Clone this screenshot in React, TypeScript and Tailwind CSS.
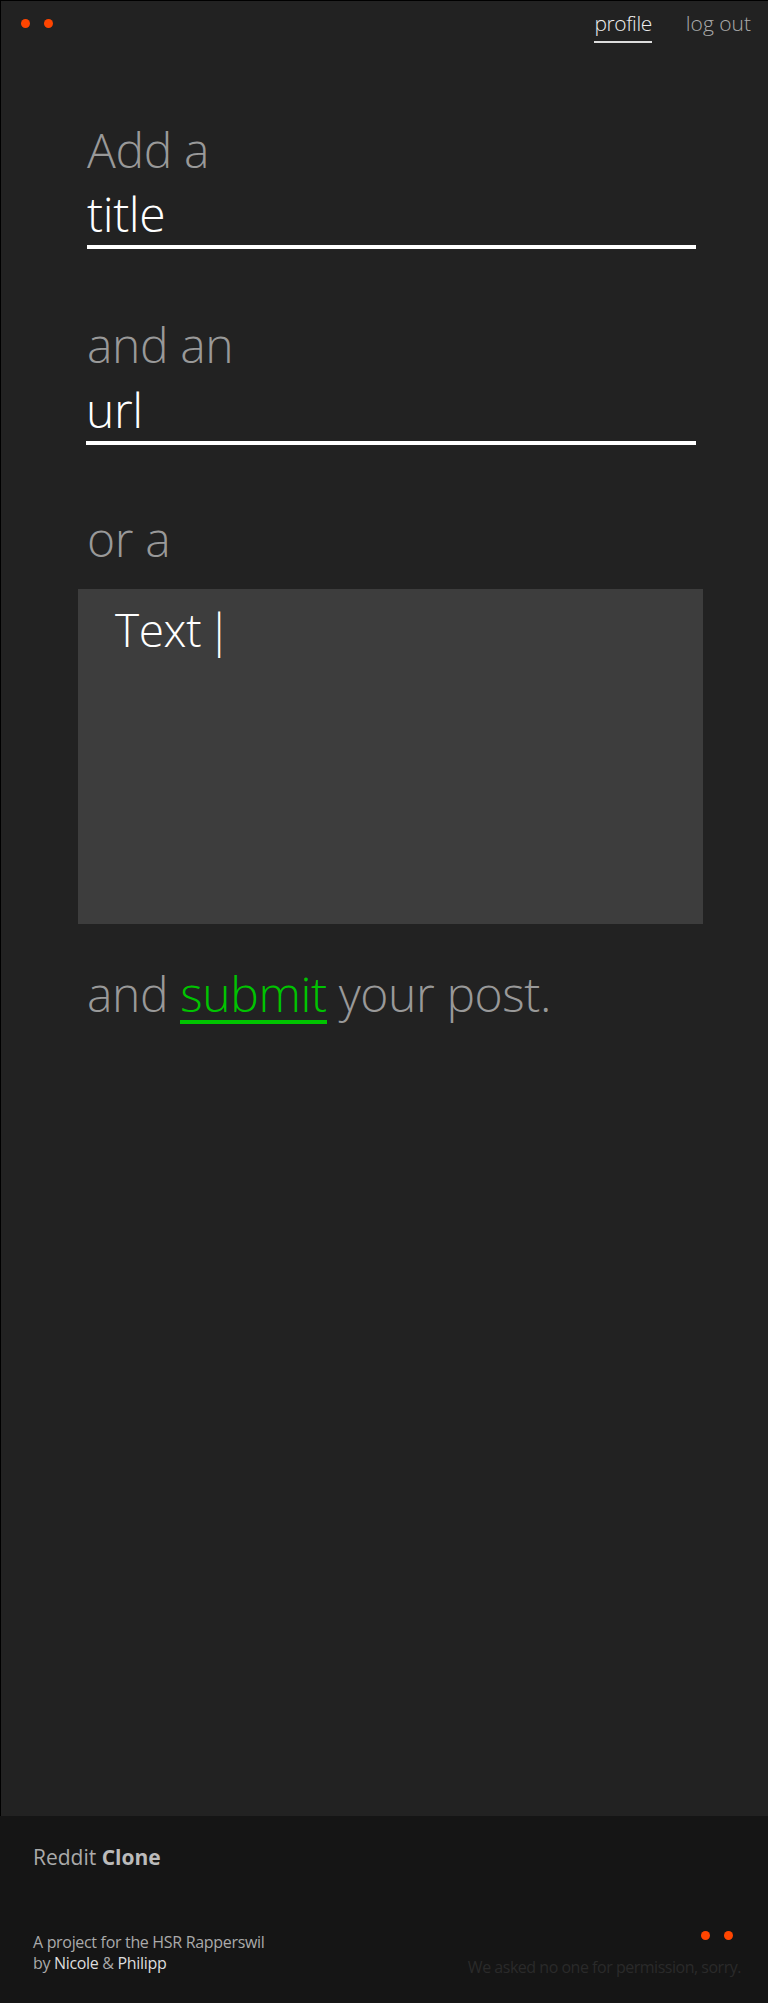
import React from "react";

export default function App() {
  return (
    <div className="font-['Open_Sans',sans-serif] bg-[#222222]">
      <main className="min-h-[1816px] border-l border-t border-black">
        <header className="flex items-start justify-between pl-[20px] pr-[17px]">
          <div className="flex gap-[14px] pt-[18px]">
            <span className="block w-[9px] h-[9px] rounded-full bg-[#ff4500]" />
            <span className="block w-[9px] h-[9px] rounded-full bg-[#ff4500]" />
          </div>
          <nav className="flex gap-[34px] pt-[8px] text-[21px] leading-[29px] font-light">
            <a className="block text-[#eeeeee] border-b-2 border-[#dddddd] pb-[3px] tracking-[-0.02em]">profile</a>
            <a className="block text-[#aaaaaa]">log out</a>
          </nav>
        </header>

        <form className="pl-[86px] pr-[72px] pt-[79px] text-[48px] leading-[56px] font-light tracking-[-0.008em]">
          <label className="block text-[#999999]">Add a</label>
          <div className="mt-[8px] text-white border-b-4 border-white pb-[3px]">title</div>

          <label className="block mt-[68px] text-[#999999]">and an</label>
          <div className="mt-[9px] text-white border-b-4 border-white pb-[3px] -ml-px">url</div>

          <label className="block mt-[66px] text-[#999999]">or a</label>
          <div className="mt-[22px] -ml-[9px] -mr-[7px] h-[335px] bg-[#3d3d3d] pl-[37px] pt-[12px] text-white text-[46px] [word-spacing:-6px]">
            Text |
          </div>

          <p className="mt-[42px] text-[#999999]">
            and{" "}
            <a className="inline-block text-[#00c400] border-b-4 border-[#00c400] leading-[52px]">submit</a>{" "}
            your post.
          </p>
        </form>
      </main>

      <footer className="h-[187px] bg-[#151515] px-[33px] pt-[27px] flex flex-col justify-between pb-[25px]">
        <div className="text-[21px] leading-[28px] text-[#aaaaaa]">
          Reddit <span className="font-bold text-[#bbbbbb]">Clone</span>
        </div>
        <div className="flex items-end justify-between">
          <div className="text-[16px] leading-[21px] text-[#aaaaaa] tracking-[-0.02em] mb-[4px]">
            <div>A project for the HSR Rapperswil</div>
            <div>
              by <span className="text-[#dddddd]">Nicole</span> &amp; <span className="text-[#dddddd]">Philipp</span>
            </div>
          </div>
          <div className="flex flex-col items-end gap-[16px] -mr-[6px]">
            <div className="flex gap-[14px] mr-[8px]">
              <span className="block w-[9px] h-[9px] rounded-full bg-[#ff4500]" />
              <span className="block w-[9px] h-[9px] rounded-full bg-[#ff4500]" />
            </div>
            <div className="text-[16px] leading-[22px] text-[#2a2a2a] tracking-[-0.03em]">
              We asked no one for permission, sorry.
            </div>
          </div>
        </div>
      </footer>
    </div>
  );
}
